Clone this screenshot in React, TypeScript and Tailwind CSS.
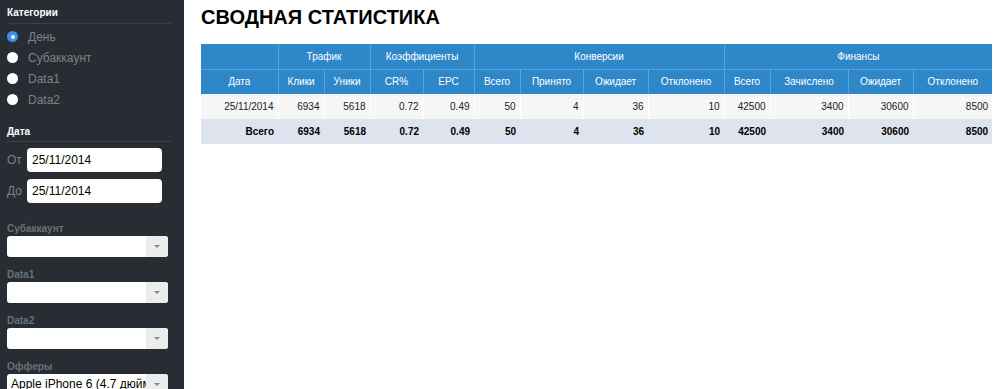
import React from "react";

const font = { fontFamily: '"Liberation Sans", Arial, sans-serif' };

function Radio({ checked }: { checked?: boolean }) {
  return checked ? (
    <span className="w-[11px] h-[11px] rounded-full bg-[#3b8fea] flex items-center justify-center">
      <span className="w-[4px] h-[4px] rounded-full bg-white" />
    </span>
  ) : (
    <span className="w-[11px] h-[11px] rounded-full bg-white" />
  );
}

function Select({ label, value }: { label: string; value?: string }) {
  return (
    <div className="flex flex-col">
      <div className="text-[10px] font-bold text-[#6b7178] h-[12px] leading-[12px] mb-[1px]">{label}</div>
      <div className="flex h-[21px] w-[161px] rounded-[3px] bg-white overflow-hidden">
        <div className="flex-1 text-[12px] text-black px-[4px] leading-[21px] whitespace-nowrap overflow-hidden">{value}</div>
        <div className="w-[22px] bg-[#ececec] flex items-center justify-center">
          <span className="w-0 h-0 border-l-[3px] border-r-[3px] border-t-[3px] border-l-transparent border-r-transparent border-t-[#888]" />
        </div>
      </div>
    </div>
  );
}

const th = "border-r border-[#5aa3d8] last:border-r-0 text-white font-normal text-[10px] h-[25px]";
const td = "border-r border-white text-right px-[4px] text-[10px] h-[25px]";

export default function App() {
  const cols = [
    ["Дата", 77],
    ["Клики", 46],
    ["Уники", 46],
    ["CR%", 53],
    ["EPC", 51],
    ["Всего", 46],
    ["Принято", 63],
    ["Ожидает", 65],
    ["Отклонено", 76],
    ["Всего", 46],
    ["Зачислено", 78],
    ["Ожидает", 65],
    ["Отклонено", 79],
  ] as const;
  const data = ["25/11/2014", "6934", "5618", "0.72", "0.49", "50", "4", "36", "10", "42500", "3400", "30600", "8500"];
  const total = ["Всего", ...data.slice(1)];
  return (
    <div className="flex w-[1000px] h-[389px] overflow-hidden bg-white" style={font}>
      <aside className="w-[184px] shrink-0 bg-[#272d33] px-[7px] pt-[7px]">
        <div className="text-[10px] font-bold text-white leading-[12px]">Категории</div>
        <div className="h-px bg-[#3a4148] mt-[4px] mb-[6px] mr-[6px]" />
        <div className="flex flex-col gap-[8px]">
          {["День", "Субаккаунт", "Data1", "Data2"].map((t, i) => (
            <div key={t} className="flex items-center gap-[10px] h-[13px]">
              <Radio checked={i === 0} />
              <span className="text-[12px] text-[#7d8288]">{t}</span>
            </div>
          ))}
        </div>
        <div className="text-[10px] font-bold text-white leading-[12px] mt-[20px]">Дата</div>
        <div className="h-px bg-[#3a4148] mt-[3px] mb-[6px] mr-[6px]" />
        <div className="flex flex-col gap-[7px]">
          {["От", "До"].map((l) => (
            <div key={l} className="flex items-center gap-[5px]">
              <span className="text-[12px] text-[#7d8288] w-[15px]">{l}</span>
              <div className="w-[135px] h-[24px] bg-white rounded-[4px] text-[12px] text-black leading-[24px] px-[5px]">25/11/2014</div>
            </div>
          ))}
        </div>
        <div className="flex flex-col gap-[12px] mt-[20px]">
          <Select label="Субаккаунт" />
          <Select label="Data1" />
          <Select label="Data2" />
          <Select label="Офферы" value="Apple iPhone 6 (4.7 дюйма)" />
        </div>
      </aside>
      <main className="flex-1 pl-[17px] pt-[6px]">
        <h1 className="text-[20px] font-bold text-black leading-[23px] mb-[15px]">СВОДНАЯ СТАТИСТИКА</h1>
        <table className="border-collapse" style={{ tableLayout: "fixed", width: 791 }}>
          <colgroup>
            {cols.map(([, w], i) => (
              <col key={i} style={{ width: w }} />
            ))}
          </colgroup>
          <thead className="bg-[#2e87c8]">
            <tr className="border-b border-[#5aa3d8]">
              <th className={th}></th>
              <th className={th} colSpan={2}>Трафик</th>
              <th className={th} colSpan={2}>Коэффициенты</th>
              <th className={th} colSpan={4}>Конверсии</th>
              <th className={th} colSpan={4}>Финансы</th>
            </tr>
            <tr>
              {cols.map(([n], i) => (
                <th key={i} className={th}>{n}</th>
              ))}
            </tr>
          </thead>
          <tbody>
            <tr className="bg-[#f6f6f6]">
              {data.map((v, i) => (
                <td key={i} className={td + " text-[#222] last:border-r-0"}>{v}</td>
              ))}
            </tr>
            <tr className="bg-[#dfe3ee]">
              {total.map((v, i) => (
                <td key={i} className="text-right px-[4px] text-[10px] h-[25px] font-bold text-black">{v}</td>
              ))}
            </tr>
          </tbody>
        </table>
      </main>
    </div>
  );
}
